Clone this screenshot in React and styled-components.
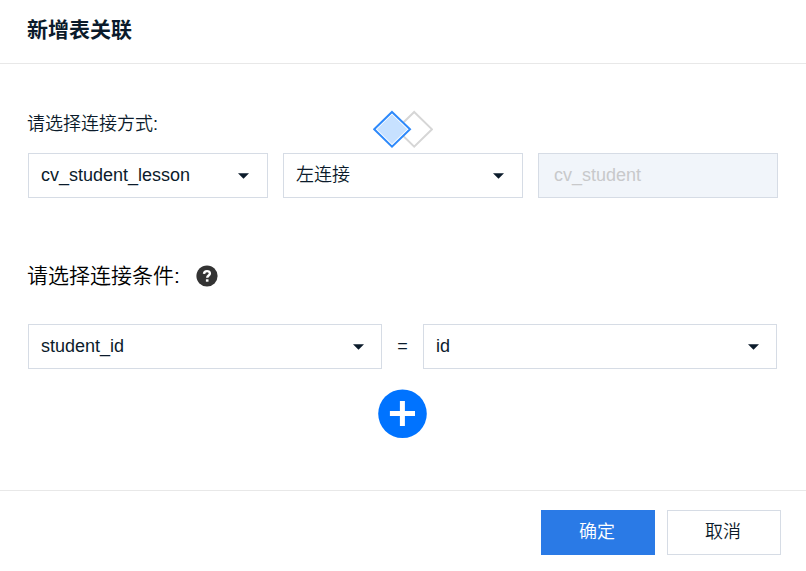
import React from "react";
import styled, { createGlobalStyle } from "styled-components";

const GlobalStyle = createGlobalStyle`
  * { box-sizing: border-box; }
  body { margin: 0; background: #fff; }
`;

const Dialog = styled.div`
  display: flex;
  flex-direction: column;
  width: 806px;
  height: 571px;
  overflow: hidden;
  background: #fff;
  color: #0b1b2b;
  font-family: "Liberation Sans", "Noto Sans CJK SC", sans-serif;
  font-size: 18px;
  font-weight: 350;
`;

const Header = styled.header`
  height: 64px;
  padding: 15px 27px 0;
  border-bottom: 1px solid #e8e8e8;
`;

const Title = styled.h1`
  margin: 0;
  font-size: 21px;
  line-height: 30px;
  font-weight: 700;
`;

const Body = styled.main`
  flex: 1;
  padding: 46px 28px 0;
`;

const JoinHead = styled.div`
  display: grid;
  grid-template-columns: 346px 60px;
  height: 43px;
  margin-left: -1px;
`;

const Label = styled.div`
  font-size: 18px;
  line-height: 28px;
`;

const JoinIcon = styled.svg`
  display: block;
  width: 60px;
  height: 39px;
`;

const JoinRow = styled.div`
  display: flex;
  gap: 15px;
`;

const Field = styled.div`
  display: flex;
  align-items: center;
  justify-content: space-between;
  width: ${(p) => p.$width}px;
  height: 45px;
  padding: 0 ${(p) => p.$endPad ?? 18}px 2px ${(p) => (p.$disabled ? 15 : 12)}px;
  border: 1px solid #d6dce5;
  background: ${(p) => (p.$disabled ? "#f1f5fa" : "#fff")};
  color: ${(p) => (p.$disabled ? "#c8c9cb" : "inherit")};
  line-height: 26px;
`;

const Caret = styled.svg`
  display: block;
  width: 11px;
  height: 6px;
  margin-top: 3px;
  fill: #0b1b2b;
`;

const ConditionHead = styled.div`
  display: flex;
  align-items: center;
  height: 32px;
  margin: 62px 0 0 -1px;
  color: #000;
  font-size: 21px;
  line-height: 32px;
`;

const HelpIcon = styled.svg`
  display: block;
  width: 22px;
  height: 22px;
  margin-left: 16px;
`;

const ConditionRow = styled.div`
  display: flex;
  margin-top: 32px;
`;

const Equals = styled.div`
  width: 41px;
  line-height: 45px;
  text-align: center;
`;

const AddButton = styled.button`
  display: block;
  width: 49px;
  height: 49px;
  margin: 20px 0 0 350px;
  padding: 0;
  border: 0;
  background: none;

  svg { display: block; }
`;

const Footer = styled.footer`
  display: flex;
  justify-content: flex-end;
  gap: 12px;
  height: 81px;
  padding: 19px 25px 0;
  border-top: 1px solid #e8e8e8;
`;

const Button = styled.button`
  width: 114px;
  height: 45px;
  padding: 0 2px 1px 0;
  border: 1px solid ${(p) => (p.$primary ? "#2a7ae6" : "#d6dce5")};
  background: ${(p) => (p.$primary ? "#2a7ae6" : "#fff")};
  color: ${(p) => (p.$primary ? "#fff" : "#0b1b2b")};
  font: inherit;
  line-height: 26px;
`;

function Select({ width, endPad, children }) {
  return (
    <Field $width={width} $endPad={endPad}>
      <span>{children}</span>
      <Caret viewBox="0 0 11 6"><path d="M0 .3H11L5.5 5.7Z" /></Caret>
    </Field>
  );
}

export default function App() {
  return (
    <>
      <GlobalStyle />
      <Dialog>
        <Header><Title>新增表关联</Title></Header>
        <Body>
          <JoinHead>
            <Label>请选择连接方式:</Label>
            <JoinIcon viewBox="0 0 60 39">
              <path d="M41.2 2L59 19.3L41.2 36.6L23.4 19.3Z" fill="#fff" stroke="#d6d6d6" strokeWidth="2" />
              <path d="M19 2L37 19.3L19 36.6L1.2 19.3Z" fill="#fff" stroke="#2d89fb" strokeWidth="2" />
              <path d="M19 4.6L34.2 19.3L19 34L3.9 19.3Z" fill="#c7e1ff" />
            </JoinIcon>
          </JoinHead>
          <JoinRow>
            <Select width={240}>cv_student_lesson</Select>
            <Select width={240}>左连接</Select>
            <Field $width={240} $disabled>cv_student</Field>
          </JoinRow>
          <ConditionHead>
            请选择连接条件:
            <HelpIcon viewBox="0 0 22 22">
              <circle cx="11" cy="11" r="10.6" fill="#333" />
              <path d="M8 8.9C8.1 7.1 9.2 6.1 11 6.1C12.8 6.1 13.9 7.1 13.9 8.5C13.9 10.5 11.2 10.5 11.2 12.8" fill="none" stroke="#fff" strokeWidth="2.4" />
              <path d="M9.9 14.3h2.6v2.4h-2.6z" fill="#fff" />
            </HelpIcon>
          </ConditionHead>
          <ConditionRow>
            <Select width={354} endPad={17}>student_id</Select>
            <Equals>=</Equals>
            <Select width={354} endPad={17}>id</Select>
          </ConditionRow>
          <AddButton aria-label="add">
            <svg width="49" height="49" viewBox="0 0 49 49">
              <circle cx="24.5" cy="24.7" r="24.3" fill="#0073ff" />
              <path d="M24.4 12V37M11.9 24.6H37" stroke="#fff" strokeWidth="5" />
            </svg>
          </AddButton>
        </Body>
        <Footer>
          <Button $primary>确定</Button>
          <Button>取消</Button>
        </Footer>
      </Dialog>
    </>
  );
}
